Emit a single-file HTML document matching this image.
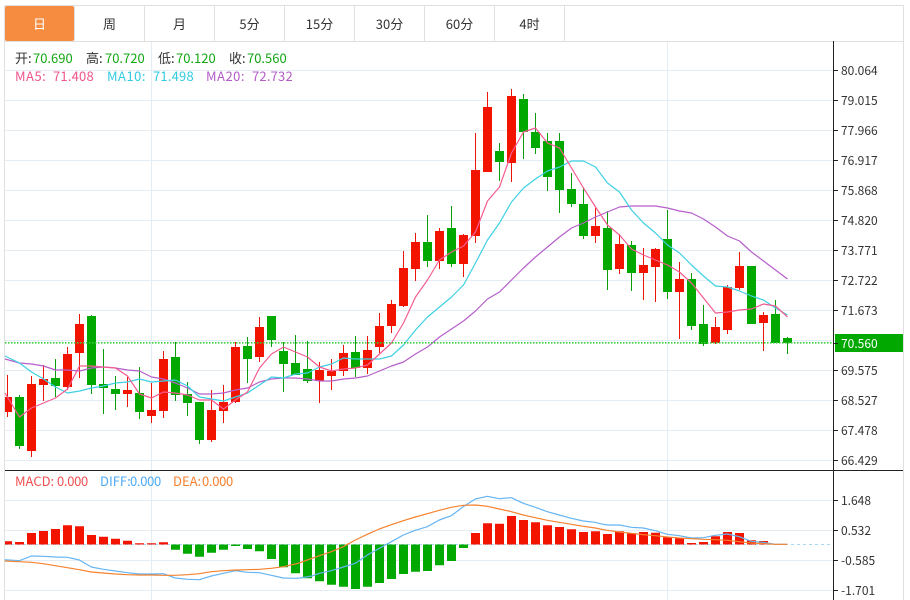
<!DOCTYPE html>
<html lang="zh-CN">
<head>
<meta charset="utf-8">
<title>K</title>
<style>
html,body{margin:0;padding:0;background:#fff;width:910px;height:600px;overflow:hidden}
svg{display:block;position:absolute;left:0;top:0}
text{font-family:"Noto Sans CJK SC","Liberation Sans",sans-serif}
</style>
</head>
<body>
<svg width="910" height="600" viewBox="0 0 910 600" xmlns="http://www.w3.org/2000/svg">
<!-- grid -->
<path fill="none" stroke="#e4edf4" stroke-width="1" d="M5 70.5H833M5 100.5H833M5 130.5H833M5 160.5H833M5 190.5H833M5 220.5H833M5 250.5H833M5 280.5H833M5 310.5H833M5 340.5H833M5 370.5H833M5 400.5H833M5 430.5H833M5 460.5H833M5 500.5H833M5 530.5H833M5 560.5H833M5 590.5H833M151.5 41V600M667.5 41V600"/>
<!-- frame -->
<path fill="none" stroke="#e0e0e0" stroke-width="1" d="M4.5 5.5H903.5V600M4.5 5.5V600M5 41.5H903M74.5 6V41M144.5 6V41M214.5 6V41M284.5 6V41M354.5 6V41M424.5 6V41M494.5 6V41M564.5 6V41"/>
<rect x="5" y="6" width="69" height="35" rx="2" fill="#f58c40"/>
<!-- tabs -->
<g font-size="13" fill="#333" text-anchor="middle">
<text x="39.5" y="29" fill="#fff">日</text>
<text x="109.5" y="29">周</text>
<text x="179.5" y="29">月</text>
<text x="249.5" y="29">5分</text>
<text x="319.5" y="29">15分</text>
<text x="389.5" y="29">30分</text>
<text x="459.5" y="29">60分</text>
<text x="529.5" y="29">4时</text>
</g>
<!-- candles -->
<path stroke="#ee1408" stroke-width="1" fill="none" d="M7.5 375V417M31.5 376V457M43.5 365V401M67.5 347V390M79.5 314V378M127.5 377V407M151.5 383V423M163.5 351V418M211.5 390V442M223.5 385V423M235.5 342V403M259.5 317V362M319.5 362V403M331.5 359V390M343.5 345V376M367.5 336V374M379.5 313V353M391.5 300V333M403.5 251V307M415.5 233V281M439.5 228V269M463.5 234V277M475.5 133V243M487.5 92V172M511.5 89V182M595.5 208V243M619.5 234V274M643.5 248V300M655.5 248V302M679.5 262V339M715.5 317V344M727.5 285V334M739.5 252V290M763.5 312V351"/>
<path fill="#f31400" d="M5 397H12V412H5ZM27 384h9V451h-9ZM39 379h9V385h-9ZM63 354h9V387h-9ZM75 324h9V353h-9ZM123 390h9V394h-9ZM147 410h9V416h-9ZM159 359h9V411h-9ZM207 410h9V440h-9ZM219 402h9V411h-9ZM231 347h9V402h-9ZM255 327h9V357h-9ZM315 370h9V381h-9ZM327 371h9V376h-9ZM339 353h9V371h-9ZM363 350h9V368h-9ZM375 326h9V347h-9ZM387 304h9V326h-9ZM399 268h9V306h-9ZM411 242h9V269h-9ZM435 231h9V261h-9ZM459 235h9V264h-9ZM471 170h9V236h-9ZM483 107h9V172h-9ZM507 96h9V163h-9ZM591 226h9V236h-9ZM615 244h9V269h-9ZM639 265h9V273h-9ZM651 249h9V267h-9ZM675 279h9V292h-9ZM711 327h9V343h-9ZM723 287h9V330h-9ZM735 266h9V288h-9ZM759 315h9V323h-9Z"/>
<path stroke="#0a9e0a" stroke-width="1" fill="none" d="M19.5 395V449M55.5 359V397M91.5 315V394M103.5 349V414M115.5 376V410M139.5 367V419M175.5 342V401M187.5 382V416M199.5 402V444M247.5 337V383M271.5 316V347M283.5 342V392M295.5 335V375M307.5 341V383M355.5 336V377M427.5 215V267M451.5 206V267M499.5 143V181M523.5 94V159M535.5 113V154M547.5 133V191M559.5 133V213M571.5 173V207M583.5 187V239M607.5 211V290M631.5 241V291M667.5 210V299M691.5 273V330M703.5 305V346M751.5 266V324M775.5 300V343M787.5 337V354"/>
<path fill="#00a800" d="M15 397h9V446h-9ZM51 378h9V386h-9ZM87 316h9V385h-9ZM99 384h9V388h-9ZM111 389h9V394h-9ZM135 393h9V412h-9ZM171 357h9V395h-9ZM183 394h9V403h-9ZM195 402h9V440h-9ZM243 346h9V359h-9ZM267 316h9V340h-9ZM279 351h9V364h-9ZM291 363h9V375h-9ZM303 369h9V381h-9ZM351 352h9V368h-9ZM423 242h9V261h-9ZM447 228h9V264h-9ZM495 151h9V162h-9ZM519 99h9V132h-9ZM531 132h9V148h-9ZM543 141h9V177h-9ZM555 141h9V190h-9ZM567 189h9V204h-9ZM579 204h9V236h-9ZM603 228h9V270h-9ZM627 245h9V273h-9ZM663 239h9V292h-9ZM687 279h9V326h-9ZM699 324h9V344h-9ZM747 266h9V324h-9ZM771 314h9V343h-9ZM783 338h9V343h-9Z"/>
<!-- MAs -->
<g fill="none" stroke-width="1.2" stroke-linejoin="round">
<polyline stroke="#b65fcb" points="5,359 19.5,363 31.5,364 43.5,366 55.5,370 67.5,370 79.5,371 91.5,368 103.5,367 115.5,368 127.5,370 139.5,371 151.5,377 163.5,379 175.5,383 187.5,388 199.5,394 211.5,394 223.5,393 235.5,390 247.5,388 259.5,382 271.5,379 283.5,378 295.5,378 307.5,379 319.5,381 331.5,381 343.5,379 355.5,378 367.5,376 379.5,371 391.5,366 403.5,362 415.5,354 427.5,347 439.5,337 451.5,329 463.5,321 475.5,311 487.5,299 499.5,292 511.5,280 523.5,268 535.5,257 547.5,247 559.5,237 571.5,228 583.5,223 595.5,217 607.5,212 619.5,207 631.5,206 643.5,206 655.5,206 667.5,208 679.5,211 691.5,213 703.5,219 715.5,227 727.5,236 739.5,241 751.5,252 763.5,261 775.5,270 787.5,279"/>
<polyline stroke="#3fd0e4" points="5,356 19.5,363 31.5,372 43.5,379 55.5,387 67.5,393 79.5,391 91.5,388 103.5,386 115.5,383 127.5,382 139.5,379 151.5,382 163.5,381 175.5,380 187.5,386 199.5,397 211.5,399 223.5,401 235.5,397 247.5,393 259.5,385 271.5,377 283.5,378 295.5,374 307.5,373 319.5,367 331.5,364 343.5,358 355.5,359 367.5,359 379.5,359 391.5,356 403.5,345 415.5,330 427.5,317 439.5,307 451.5,297 463.5,285 475.5,263 487.5,240 499.5,223 511.5,202 523.5,188 535.5,179 547.5,171 559.5,167 571.5,161 583.5,161 595.5,167 607.5,183 619.5,192 631.5,210 643.5,223 655.5,233 667.5,245 679.5,253 691.5,265 703.5,276 715.5,286 727.5,287 739.5,291 751.5,296 763.5,300 775.5,308 787.5,315"/>
<polyline stroke="#f55c90" points="5,393 19.5,417 31.5,408 43.5,403 55.5,398 67.5,389 79.5,366 91.5,366 103.5,367 115.5,368 127.5,376 139.5,394 151.5,398 163.5,392 175.5,393 187.5,395 199.5,400 211.5,400 223.5,409 235.5,400 247.5,392 259.5,368 271.5,354 283.5,347 295.5,352 307.5,357 319.5,367 331.5,371 343.5,369 355.5,368 367.5,365 379.5,354 391.5,343 403.5,323 415.5,297 427.5,280 439.5,260 451.5,252 463.5,246 475.5,232 487.5,201 499.5,187 511.5,153 523.5,132 535.5,128 547.5,143 559.5,148 571.5,168 583.5,188 595.5,207 607.5,225 619.5,235 631.5,249 643.5,255 655.5,260 667.5,265 679.5,272 691.5,283 703.5,298 715.5,313 727.5,312 739.5,310 751.5,309 763.5,304 775.5,306 787.5,317"/>
</g>
<!-- last price line -->
<path stroke="#3ccb3c" stroke-width="1.7" stroke-dasharray="1.5 1.5" fill="none" d="M5 342.8H833"/>
<!-- MACD zero -->
<path stroke="#a9d6f2" stroke-width="1" stroke-dasharray="3 3" fill="none" d="M5 544.5H832"/>
<!-- MACD bars -->
<path fill="#f31400" d="M5 541.3H12V544.5H5ZM15 542h9V544.5h-9ZM27 533h9V544.5h-9ZM39 531h9V544.5h-9ZM51 529h9V544.5h-9ZM63 525.3h9V544.5h-9ZM75 526.3h9V544.5h-9ZM87 535h9V544.5h-9ZM99 536.7h9V544.5h-9ZM111 538.7h9V544.5h-9ZM123 540.7h9V544.5h-9ZM135 543.3h9V544.5h-9ZM147 543.3h9V544.5h-9ZM159 542.3h9V544.5h-9ZM471 533h9V544.5h-9ZM483 523.3h9V544.5h-9ZM495 523.7h9V544.5h-9ZM507 516h9V544.5h-9ZM519 520h9V544.5h-9ZM531 522.3h9V544.5h-9ZM543 525.3h9V544.5h-9ZM555 527h9V544.5h-9ZM567 529.3h9V544.5h-9ZM579 532h9V544.5h-9ZM591 531.3h9V544.5h-9ZM603 534h9V544.5h-9ZM615 531.3h9V544.5h-9ZM627 533.3h9V544.5h-9ZM639 532h9V544.5h-9ZM651 532.7h9V544.5h-9ZM663 537.3h9V544.5h-9ZM675 538.3h9V544.5h-9ZM687 543h9V544.5h-9ZM699 542h9V544.5h-9ZM711 536.3h9V544.5h-9ZM723 532h9V544.5h-9ZM735 533h9V544.5h-9ZM747 540.3h9V544.5h-9ZM759 541h9V544.5h-9Z"/>
<path fill="#00a800" d="M171 544.5h9V549.7h-9ZM183 544.5h9V553.7h-9ZM195 544.5h9V556.7h-9ZM207 544.5h9V552.7h-9ZM219 544.5h9V549.7h-9ZM231 544.5h9V546h-9ZM243 544.5h9V549h-9ZM255 544.5h9V551.3h-9ZM267 544.5h9V559h-9ZM279 544.5h9V567.3h-9ZM291 544.5h9V573.3h-9ZM303 544.5h9V578.3h-9ZM315 544.5h9V581.3h-9ZM327 544.5h9V584.7h-9ZM339 544.5h9V586.7h-9ZM351 544.5h9V589h-9ZM363 544.5h9V586.7h-9ZM375 544.5h9V583h-9ZM387 544.5h9V579h-9ZM399 544.5h9V574h-9ZM411 544.5h9V571.7h-9ZM423 544.5h9V571h-9ZM435 544.5h9V565.3h-9ZM447 544.5h9V561h-9ZM459 544.5h9V548h-9Z"/>
<!-- DIFF / DEA -->
<g fill="none" stroke-width="3.6" stroke-linejoin="round" transform="translate(0 465) scale(.33333)">
<polyline stroke="#66b5f3" points="14,284 58,287 94,273 130,274 166,276 202,277 238,285 274,306 310,313 346,318 382,323 418,327 454,327 490,326 526,339 562,343 598,344 634,333 670,325 706,317 742,322 778,323 814,331 850,339 886,340 900,339 936,333 958,325 994,317 1030,306 1066,295 1102,270 1138,250 1174,230 1210,210 1246,196 1282,185 1318,165 1354,152 1390,125 1426,102 1462,94 1498,101 1534,98 1570,115 1606,127 1642,140 1678,150 1714,160 1750,168 1786,172 1800,176 1822,180 1858,180 1894,187 1930,189 1966,197 2002,208 2038,212 2074,219 2110,218 2146,211 2182,207 2218,215 2254,229 2290,232 2326,238 2362,238"/>
<polyline stroke="#f5822e" points="14,288 58,290 94,292 130,296 166,302 202,308 238,314 274,321 310,324 346,327 382,329 418,330 454,330 490,331 526,331 562,329 598,326 634,320 670,317 706,315 742,314 778,313 814,310 850,305 886,297 900,293 922,285 958,272 994,260 1030,245 1066,225 1102,208 1138,192 1174,179 1210,167 1246,156 1282,146 1318,136 1354,127 1390,121 1426,120 1462,124 1498,132 1534,140 1570,150 1606,158 1642,166 1678,172 1714,178 1750,184 1786,189 1800,192 1822,196 1858,201 1894,205 1930,209 1966,212 2002,216 2038,219 2074,221 2110,223 2146,224 2182,226 2218,230 2254,234 2290,236 2326,238 2362,238"/>
</g>
<!-- axes -->
<path fill="none" stroke="#222" stroke-width="1" d="M833.5 41V600M5 470.5H903M833 70.5h5M833 100.5h5M833 130.5h5M833 160.5h5M833 190.5h5M833 220.5h5M833 250.5h5M833 280.5h5M833 310.5h5M833 343.5h5M833 370.5h5M833 400.5h5M833 430.5h5M833 460.5h5M833 500.5h5M833 530.5h5M833 560.5h5M833 590.5h5"/>
<rect x="835" y="334" width="68" height="18" fill="#00a800"/>
<path stroke="#222" d="M835 343.5h3"/>
<g font-size="12" fill="#333">
<text x="841" y="75">80.064</text>
<text x="841" y="105">79.015</text>
<text x="841" y="135">77.966</text>
<text x="841" y="165">76.917</text>
<text x="841" y="195">75.868</text>
<text x="841" y="225">74.820</text>
<text x="841" y="255">73.771</text>
<text x="841" y="285">72.722</text>
<text x="841" y="315">71.673</text>
<text x="841" y="348" fill="#fff">70.560</text>
<text x="841" y="375">69.575</text>
<text x="841" y="405">68.527</text>
<text x="841" y="435">67.478</text>
<text x="841" y="465">66.429</text>
<text x="841" y="505">1.648</text>
<text x="841" y="535">0.532</text>
<text x="841" y="565">-0.585</text>
<text x="841" y="595">-1.701</text>
</g>
<!-- legend -->
<g font-size="13">
<text x="15" y="63" fill="#333">开:</text><text x="33" y="63" fill="#13a813">70.690</text>
<text x="86" y="63" fill="#333">高:</text><text x="105" y="63" fill="#13a813">70.720</text>
<text x="158" y="63" fill="#333">低:</text><text x="176" y="63" fill="#13a813">70.120</text>
<text x="229" y="63" fill="#333">收:</text><text x="247" y="63" fill="#13a813">70.560</text>
<g letter-spacing=".2">
<text x="15" y="81" fill="#f0558c" letter-spacing=".5">MA5:</text><text x="53" y="81" fill="#f0558c">71.408</text>
<text x="107" y="81" fill="#32cbe0" letter-spacing=".5">MA10:</text><text x="153" y="81" fill="#32cbe0">71.498</text>
<text x="206" y="81" fill="#b45cc8" letter-spacing=".5">MA20:</text><text x="252" y="81" fill="#b45cc8">72.732</text>
</g>
<text x="15" y="486" fill="#f25050">MACD:</text><text x="57" y="486" fill="#f25050" letter-spacing="-.3">0.000</text>
<text x="100" y="486" fill="#4eaaf5">DIFF:</text><text x="130" y="486" fill="#4eaaf5" letter-spacing="-.3">0.000</text>
<text x="173" y="486" fill="#f5802e">DEA:</text><text x="202" y="486" fill="#f5802e" letter-spacing="-.3">0.000</text>
</g>
</svg>
</body>
</html>
